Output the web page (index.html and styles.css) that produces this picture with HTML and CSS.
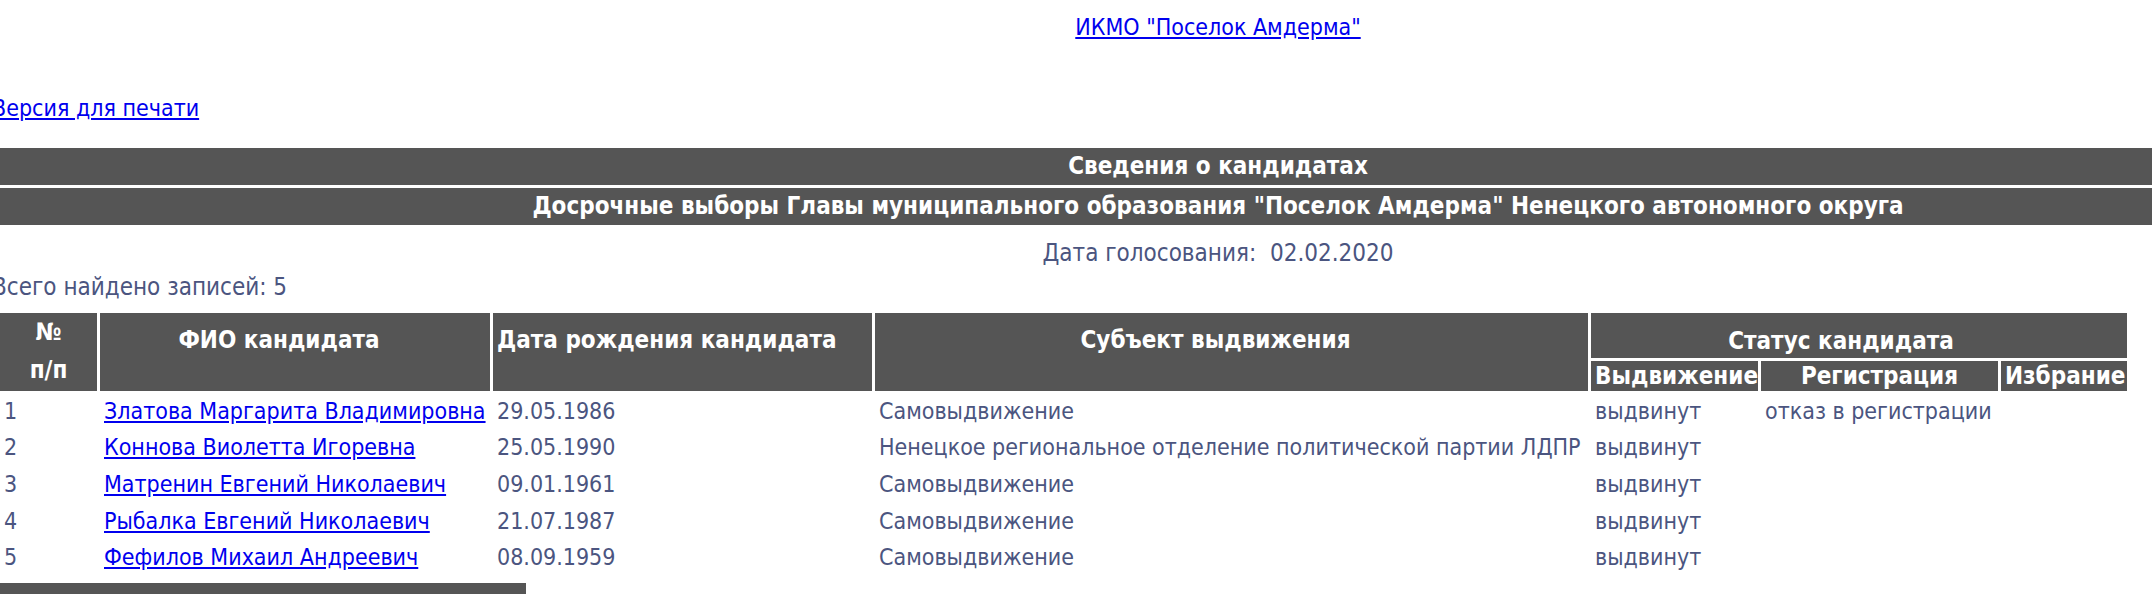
FILE: index.html
```html
<!DOCTYPE html>
<html lang="ru">
<head>
<meta charset="utf-8">
<title>Сведения о кандидатах</title>
<link rel="stylesheet" href="styles.css">
</head>
<body>
<div class="page">
  <div class="top"><a href="#">ИКМО "Поселок Амдерма"</a></div>
  <div class="print"><a href="#">Версия для печати</a></div>
  <div class="bars">
    <div class="bar">Сведения о кандидатах</div>
    <div class="bar">Досрочные выборы Главы муниципального образования "Поселок Амдерма" Ненецкого автономного округа</div>
  </div>
  <div class="vote-date">Дата голосования:&nbsp; 02.02.2020</div>
  <div class="total">Всего найдено записей: 5</div>
  <table class="cands">
    <colgroup>
      <col class="c-num"><col class="c-fio"><col class="c-birth"><col class="c-subj"><col class="c-nom"><col class="c-reg"><col class="c-el">
    </colgroup>
    <thead>
      <tr class="h1">
        <th rowspan="2" class="num">№<br>п/п</th>
        <th rowspan="2" class="sort">ФИО кандидата</th>
        <th rowspan="2" class="sort">Дата рождения кандидата</th>
        <th rowspan="2" class="sort">Субъект выдвижения</th>
        <th colspan="3" class="status">Статус кандидата</th>
      </tr>
      <tr class="h2">
        <th>Выдвижение</th>
        <th>Регистрация</th>
        <th>Избрание</th>
      </tr>
    </thead>
    <tbody>
      <tr><td>1</td><td><a href="#">Златова Маргарита Владимировна</a></td><td>29.05.1986</td><td>Самовыдвижение</td><td>выдвинут</td><td>отказ в регистрации</td><td></td></tr>
      <tr><td>2</td><td><a href="#">Коннова Виолетта Игоревна</a></td><td>25.05.1990</td><td>Ненецкое региональное отделение политической партии ЛДПР</td><td>выдвинут</td><td></td><td></td></tr>
      <tr><td>3</td><td><a href="#">Матренин Евгений Николаевич</a></td><td>09.01.1961</td><td>Самовыдвижение</td><td>выдвинут</td><td></td><td></td></tr>
      <tr><td>4</td><td><a href="#">Рыбалка Евгений Николаевич</a></td><td>21.07.1987</td><td>Самовыдвижение</td><td>выдвинут</td><td></td><td></td></tr>
      <tr><td>5</td><td><a href="#">Фефилов Михаил Андреевич</a></td><td>08.09.1959</td><td>Самовыдвижение</td><td>выдвинут</td><td></td><td></td></tr>
    </tbody>
  </table>
  <div class="footer-bar"></div>
</div>
</body>
</html>
```
FILE: styles.css
```css
html, body {
  margin: 0;
  padding: 0;
  background: #fff;
  overflow: hidden;
}
body {
  font-family: "DejaVu Sans Condensed", "DejaVu Sans", sans-serif;
  font-stretch: condensed;
  font-size: 24px;
  color: #4b5580;
}
a {
  color: #0000ee;
  text-decoration: underline;
}
.page {
  margin-left: -8px;
  width: 2452px;
}
.top {
  padding-top: 12px;
  text-align: center;
  font-size: 23px;
  line-height: 30px;
}
.print {
  margin-top: 51px;
  font-size: 23px;
  line-height: 30px;
}
.bars {
  margin-top: 25px;
  display: flex;
  flex-direction: column;
  gap: 3px;
}
.bar {
  height: 37px;
  line-height: 37px;
  background: #555555;
  color: #fff;
  font-weight: bold;
  text-align: center;
}
.vote-date {
  margin-top: 13px;
  line-height: 30px;
  text-align: center;
}
.total {
  margin-top: 4px;
  line-height: 30px;
}
.cands {
  margin-top: 8px;
  margin-left: 5px;
  border-collapse: separate;
  border-spacing: 3px;
  table-layout: fixed;
  width: 2133px;
}
.c-num { width: 97px; }
.c-fio { width: 390px; }
.c-birth { width: 379px; }
.c-subj { width: 713px; }
.c-nom { width: 167px; }
.c-reg { width: 237px; }
.c-el { width: 126px; }
.cands th, .cands td {
  box-sizing: border-box;
  padding: 0 4px;
  white-space: nowrap;
  overflow: hidden;
}
.cands th {
  background: #555555;
  color: #fff;
  font-weight: bold;
  text-align: center;
  line-height: 30px;
}
.h1 th { height: 45px; }
.h2 th { height: 30px; vertical-align: middle; }
.cands th.sort {
  vertical-align: top;
  padding-top: 12px;
  padding-right: 36px;
}
.cands th.num {
  vertical-align: top;
  line-height: 38px;
  padding-top: 0;
}
.cands th.status {
  vertical-align: bottom;
  padding-bottom: 2px;
  padding-right: 40px;
}
.cands td {
  height: 33.6px;
  font-size: 23px;
  line-height: 30px;
  vertical-align: middle;
  text-align: left;
}
.footer-bar {
  margin-top: 6px;
  margin-left: 8px;
  width: 526px;
  height: 12px;
  background: #555555;
}
```
